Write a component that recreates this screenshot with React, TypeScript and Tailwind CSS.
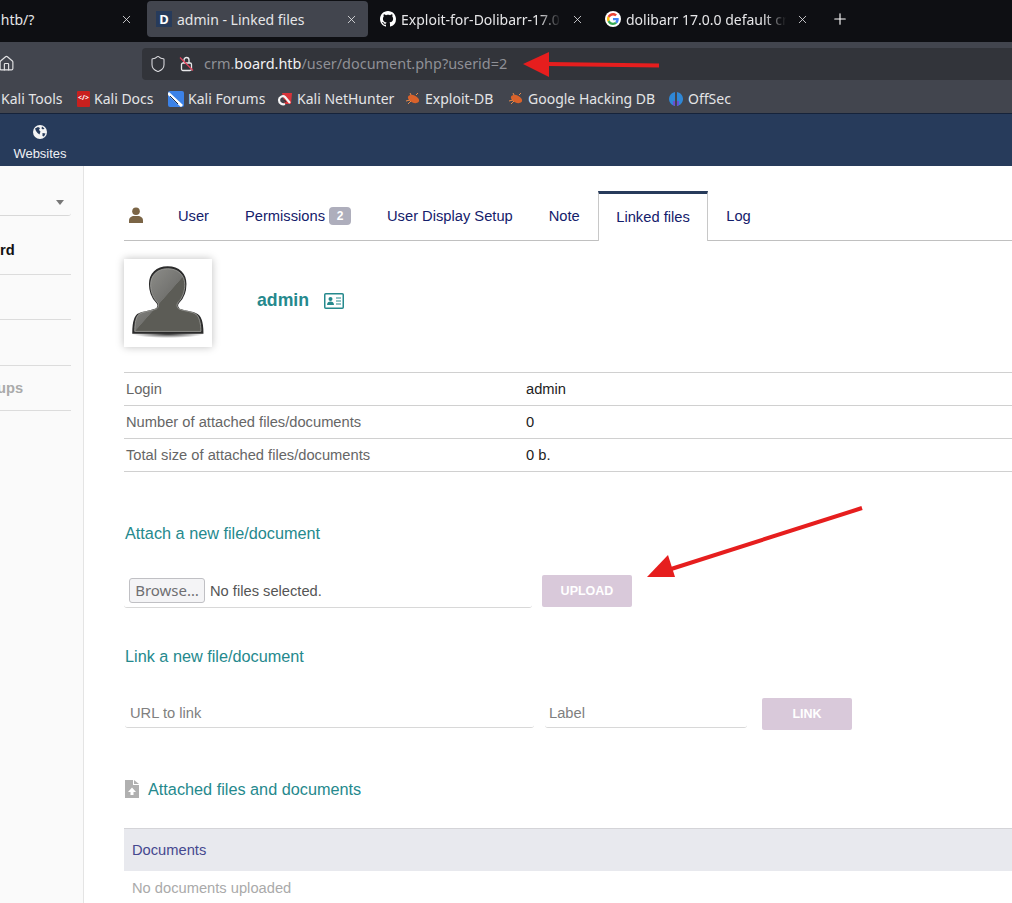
import { Home, Shield, X, Plus } from "lucide-react";

const browserFont = "font-['Noto_Sans',sans-serif]";

const Tab = ({
  title,
  icon,
  active,
}: {
  title: string;
  icon?: React.ReactNode;
  active?: boolean;
}) => (
  <div
    className={`h-[36px] flex items-center gap-[5px] rounded-[4px] shrink-0 ${
      active ? "w-[221px] mr-[4px] pl-[9px] pr-[10px] bg-[#42454e]" : "w-[225px] pl-[8px] pr-[13px]"
    }`}
  >
    {icon}
    <span
      className={`flex-1 overflow-hidden whitespace-nowrap text-[14px] text-[#e6e6e8] ${
        active ? "" : "[mask-image:linear-gradient(to_right,black_85%,transparent_99%)]"
      }`}
    >
      {title}
    </span>
    <X size={13} strokeWidth={1.5} className="text-[#e8e8ea] shrink-0 ml-[3px]" />
  </div>
);

const Bookmark = ({ icon, label, width }: { icon?: React.ReactNode; label: string; width: string }) => (
  <div className={`${width} flex items-center gap-[4px] shrink-0`}>
    {icon}
    <span className="text-[14px] text-[#e4e4e6] whitespace-nowrap">{label}</span>
  </div>
);

const Bug = () => (
  <svg width="16" height="14" viewBox="0 0 16 14">
    <ellipse cx="8.500" cy="7" rx="6" ry="3.600" transform="rotate(25 8.500 7)" fill="#d9622b" />
    <path d="M1 9l4-1M3 12l3-3M11 3l2-2M6 3L5 1" stroke="#e88a4a" strokeWidth="1" />
  </svg>
);

const Github = () => (
  <svg width="16" height="16" viewBox="0 0 16 16" fill="#fff" className="shrink-0">
    <path d="M8 0C3.58 0 0 3.58 0 8c0 3.54 2.29 6.53 5.47 7.59.4.07.55-.17.55-.38 0-.19-.01-.82-.01-1.49-2.01.37-2.53-.49-2.69-.94-.09-.23-.48-.94-.82-1.13-.28-.15-.68-.52-.01-.53.63-.01 1.08.58 1.23.82.72 1.21 1.87.87 2.33.66.07-.52.28-.87.51-1.07-1.78-.2-3.64-.89-3.64-3.95 0-.87.31-1.59.82-2.15-.08-.2-.36-1.02.08-2.12 0 0 .67-.21 2.2.82.64-.18 1.32-.27 2-.27s1.36.09 2 .27c1.53-1.04 2.2-.82 2.2-.82.44 1.1.16 1.92.08 2.12.51.56.82 1.27.82 2.15 0 3.07-1.87 3.75-3.65 3.95.29.25.54.73.54 1.48 0 1.07-.01 1.93-.01 2.2 0 .21.15.46.55.38A8.01 8.01 0 0 0 16 8c0-4.42-3.58-8-8-8z" />
  </svg>
);

const Google = () => (
  <span className="w-[16px] h-[16px] rounded-full bg-white flex items-center justify-center shrink-0">
    <svg width="12" height="12" viewBox="0 0 48 48">
      <path fill="#EA4335" d="M24 9.500c3.500 0 6.700 1.200 9.100 3.600l6.800-6.800C35.800 2.500 30.300 0 24 0 14.600 0 6.500 5.400 2.600 13.200l7.900 6.100C12.400 13.600 17.700 9.500 24 9.500z" />
      <path fill="#4285F4" d="M46.900 24.500c0-1.600-.1-3.100-.4-4.500H24v9h12.900c-.6 3-2.200 5.500-4.700 7.200l7.700 6c4.500-4.200 7-10.300 7-17.700z" />
      <path fill="#FBBC05" d="M10.500 28.700c-.5-1.500-.8-3-.8-4.700s.3-3.200.8-4.700l-7.900-6.100C.9 16.500 0 20.100 0 24s.9 7.500 2.600 10.800l7.900-6.100z" />
      <path fill="#34A853" d="M24 48c6.500 0 11.900-2.100 15.900-5.800l-7.700-6c-2.200 1.400-4.900 2.300-8.200 2.300-6.300 0-11.600-4.100-13.500-9.800l-7.900 6.100C6.500 42.600 14.600 48 24 48z" />
    </svg>
  </span>
);

const TabLink = ({ label, badge, active }: { label: string; badge?: string; active?: boolean }) => (
  <div
    className={`h-[50px] flex items-center text-[14.7px] text-[#14206b] ${
      active ? "px-[17.5px] border-x border-[#c8c8c8] border-t-[3px] border-t-[#273b5b] bg-white mb-[-1px]" : "px-[18px] pt-[1px]"
    }`}
  >
    {label}
    {badge && (
      <span className="ml-[4px] w-[22px] h-[18px] rounded-[4px] bg-[#aeaebc] text-white text-[12px] font-bold flex items-center justify-center">
        {badge}
      </span>
    )}
  </div>
);

const InfoRow = ({ label, value }: { label: string; value: string }) => (
  <div className="h-[33px] flex items-center border-b border-[#d0d0d0] text-[14.7px]">
    <span className="w-[402px] pl-[2px] text-[#666]">{label}</span>
    <span className="text-[#222]">{value}</span>
  </div>
);

const SectionTitle = ({ children }: { children: React.ReactNode }) => (
  <div className="text-[16.25px] leading-[20px] text-[#25898d]">{children}</div>
);

const SideRow = ({ height }: { height: string }) => <div className={`${height} mr-[12px] border-b border-[#dcdcdc]`} />;

const bodyPath =
  "M37.700 2C49 2 55.700 9 55.700 19C55.700 26 53 33 49 37C47 39 47 42 49 44C52 46 62 47 66 49C71 51 72.700 60 72.700 68H3C3 60 4 51 9 49C13 47 23 46 26.500 44C28.500 42 28.500 39 26.500 37C22.500 33 19.700 26 19.700 19C19.700 9 26.500 2 37.700 2Z";

export default function App() {
  return (
    <div className="relative w-[1012px] h-[903px] overflow-hidden bg-white font-['Liberation_Sans',Arial,sans-serif]">
      {/* browser chrome */}
      <div className={browserFont}>
        <div className="h-[42px] bg-[#0e0f13] flex items-center pb-[5px] pt-[1px]">
          <div className="w-[141px] ml-[-3px] h-[36px] flex items-center pr-[5px] shrink-0">
            <span className="flex-1 text-[14px] text-[#e6e6e8]">.htb/?</span>
            <X size={13} strokeWidth={1.5} className="text-[#e8e8ea]" />
          </div>
          <div className="w-[9px] shrink-0" />
          <Tab
            active
            title="admin - Linked files"
            icon={
              <span className="w-[16px] h-[16px] bg-[#273b5b] text-white text-[13px] font-bold flex items-center justify-center leading-none shrink-0">
                D
              </span>
            }
          />
          <Tab title="Exploit-for-Dolibarr-17.0.0" icon={<Github />} />
          <Tab title="dolibarr 17.0.0 default cred" icon={<Google />} />
          <Plus size={18} strokeWidth={1.5} className="text-white ml-[9px]" />
        </div>
        <div className="h-[42px] bg-[#42454e] flex items-center pt-[1px]">
          <Home size={17} strokeWidth={1.6} className="text-[#e4e4e6] ml-[-2px] shrink-0" />
          <div className="ml-[127px] flex-1 h-[32px] bg-[#32343a] rounded-l-[4px] flex items-center pl-[7px]">
            <Shield size={18} strokeWidth={1.4} className="text-[#dcdce0]" />
            <span className="ml-[11px] w-[16px] h-[16px] flex items-center justify-center">
              <svg width="15" height="16" viewBox="0 0 15 16" fill="none">
                <path d="M5 7V4a2.500 2.500 0 0 1 5 0V7" stroke="#e8e8ea" strokeWidth="1.300" />
                <rect x="2.500" y="7" width="10" height="7.500" rx="1.500" stroke="#e8e8ea" strokeWidth="1.300" />
                <path d="M1 1.500l13 13" stroke="#e0405c" strokeWidth="1.300" />
              </svg>
            </span>
            <span className="ml-[10px] text-[14.45px] text-[#8f9096] whitespace-nowrap">
              crm.<span className="text-[#f0f0f2]">board.htb</span>/user/document.php?userid=2
            </span>
          </div>
        </div>
        <div className="h-[29px] bg-[#42454e] flex items-center pl-[1px]">
          <Bookmark width="w-[76px]" label="Kali Tools" />
          <Bookmark
            width="w-[91px]"
            label="Kali Docs"
            icon={<span className="w-[13px] h-[16px] bg-[#c8201e] rounded-[1px] text-white text-[7px] font-bold flex items-center justify-center">&lt;/&gt;</span>}
          />
          <Bookmark
            width="w-[109px]"
            label="Kali Forums"
            icon={
              <svg width="16" height="16" viewBox="0 0 16 16">
                <rect width="16" height="16" rx="2" fill="#3b82e8" />
                <path d="M0 2l14 13" stroke="#fff" strokeWidth="3" />
                <path d="M2 5l8 8" stroke="#20304a" strokeWidth="1" />
              </svg>
            }
          />
          <Bookmark
            width="w-[128px]"
            label="Kali NetHunter"
            icon={
              <svg width="16" height="16" viewBox="0 0 16 16">
                <path d="M5 2h10l-1 11H8z" fill="#d8333a" />
                <path d="M13 12L8 6C6 4 2 6 2 9c0 3 3 5 6 4" fill="none" stroke="#f4f4f4" strokeWidth="2.200" />
                <path d="M7 9l2 2" stroke="#333" strokeWidth="1.500" />
              </svg>
            }
          />
          <Bookmark width="w-[103px]" label="Exploit-DB" icon={<Bug />} />
          <Bookmark width="w-[160px]" label="Google Hacking DB" icon={<Bug />} />
          <Bookmark
            width="w-[80px]"
            label="OffSec"
            icon={
              <svg width="16" height="16" viewBox="0 0 16 16">
                <path d="M7 1C3 2 1 5 1 8c0 3 2 6 6 7z" fill="#2f87d6" />
                <path d="M9 1c4 1 6 4 6 7 0 3-2 6-6 7z" fill="#2f87d6" />
                <path d="M5 10v4l2 1v-5zM9 10v5l2-1v-4z" fill="#6a4fd0" />
              </svg>
            }
          />
        </div>
      </div>

      {/* app top bar */}
      <div className="h-[53px] bg-[#273b5b] border-t border-[#16233a] flex">
        <div className="w-[80px] flex flex-col items-center pt-[11px]">
          <svg width="14" height="14" viewBox="0 0 14 14">
            <circle cx="7" cy="7" r="7" fill="#f4f4f4" />
            <path d="M2 3.500l3-1.500 2 1-1 2 1.500 1.500-1 3-2-1.500L3 6zM9 1.500l2.500 2-1.500 1-1.500-1zM9.500 8l3 .5-1.500 3-1.500-.5z" fill="#273b5b" />
          </svg>
          <span className="mt-[7px] text-[13px] leading-[16px] text-[#eef0f4]">Websites</span>
        </div>
      </div>

      <div className="flex h-[737px]">
        {/* left menu, cut off by the screenshot */}
        <aside className="w-[84px] shrink-0 bg-[#fafafa] border-r border-[#e4e4e4] text-[14.7px]">
          <div className="h-[50px] mr-[12px] border-b border-[#d8d8d8] rounded-br-[3px] flex items-center justify-end pr-[7px] pt-[23px]">
            <span className="w-0 h-0 border-x-[4px] border-x-transparent border-t-[5px] border-t-[#777]" />
          </div>
          <div className="h-[59px] mr-[12px] border-b border-[#dcdcdc] flex items-center pb-[11px] pt-[22px] overflow-hidden">
            <span className="font-bold text-[#111]">rd</span>
          </div>
          <SideRow height="h-[45px]" />
          <SideRow height="h-[46px]" />
          <div className="h-[45px] mr-[12px] border-b border-[#dcdcdc] flex items-center overflow-hidden">
            <span className="font-bold text-[#aaa] ml-[-3px] pt-[1px]">ups</span>
          </div>
        </aside>

        <main className="flex-1 min-w-0 pl-[40px]">
          {/* tabs */}
          <div className="mt-[25px] h-[50px] border-b border-[#c0c0c0] flex items-center">
            <svg width="14" height="16" viewBox="0 0 14 16" className="ml-[5px] mr-[17px] mt-[-1px]" fill="#7b6546">
              <circle cx="7" cy="4.200" r="3.800" />
              <path d="M0 16v-2.500C0 10.500 2.500 9 5 9h4c2.500 0 5 1.500 5 4.500V16z" />
            </svg>
            <TabLink label="User" />
            <TabLink label="Permissions" badge="2" />
            <TabLink label="User Display Setup" />
            <TabLink label="Note" />
            <TabLink label="Linked files" active />
            <TabLink label="Log" />
          </div>

          {/* user card */}
          <div className="mt-[18px] flex items-center">
            <div className="w-[88px] h-[88px] bg-white shadow-[0_0_8px_rgba(0,0,0,0.25)] flex items-center justify-center">
              <svg width="76" height="76" viewBox="0 0 76 76">
                <defs>
                  <linearGradient id="head" x1="0.2" y1="0" x2="0.8" y2="0.5">
                    <stop offset="0" stopColor="#8e8e8a" />
                    <stop offset="0.62" stopColor="#737370" />
                    <stop offset="0.63" stopColor="#5c5c56" />
                  </linearGradient>
                  <radialGradient id="floor">
                    <stop offset="0" stopColor="#333" />
                    <stop offset="1" stopColor="#333" stopOpacity="0" />
                  </radialGradient>
                </defs>
                <ellipse cx="38" cy="69" rx="36" ry="4" fill="url(#floor)" />
                <path d={bodyPath} fill="#2b2b2b" stroke="#2b2b2b" strokeWidth="1.500" />
                <path
                  d={bodyPath}
                  fill="url(#head)"
                  stroke="#a8a8a4"
                  strokeWidth="0.800"
                  transform="translate(37.700 36) scale(0.95) translate(-37.700 -36)"
                />
              </svg>
            </div>
            <span className="ml-[45px] mt-[-6px] text-[17.7px] font-bold text-[#25898d]">admin</span>
            <svg width="20" height="16" viewBox="0 0 20 16" className="ml-[15px] mt-[-5px]">
              <rect x="0.750" y="0.750" width="18.500" height="14.500" rx="1" fill="none" stroke="#25898d" strokeWidth="1.500" />
              <circle cx="6.500" cy="6" r="2" fill="#25898d" />
              <path d="M3 12c0-2.500 1.500-3.500 3.500-3.500S10 9.500 10 12z" fill="#25898d" />
              <path d="M12 5h5M12 8h5M12 11h5" stroke="#25898d" strokeWidth="1" />
            </svg>
          </div>

          {/* counters */}
          <div className="mt-[25px] border-t border-[#d0d0d0]">
            <InfoRow label="Login" value="admin" />
            <InfoRow label="Number of attached files/documents" value="0" />
            <InfoRow label="Total size of attached files/documents" value="0 b." />
          </div>

          {/* attach */}
          <div className="mt-[51px] pl-[1px]">
            <SectionTitle>Attach a new file/document</SectionTitle>
          </div>
          <div className="mt-[31px] flex items-end">
            <div className="w-[408px] h-[34px] mb-[-1px] border-b border-[#d8d8d8] rounded-b-[3px] flex items-center pl-[5px]">
              <span className={`${browserFont} w-[76px] h-[25px] border border-[#c0c0c4] rounded-[3px] bg-[#f4f4f6] text-[15px] text-[#6f6f72] flex items-center justify-center`}>
                Browse…
              </span>
              <span className="ml-[5px] pt-[1px] text-[14.7px] text-[#555]">No files selected.</span>
            </div>
            <div className="ml-[10px] w-[90px] h-[32px] rounded-[2px] bg-[#d9c9da] text-white text-[12.5px] font-bold flex items-center justify-center">
              UPLOAD
            </div>
          </div>

          {/* link */}
          <div className="mt-[39px] pl-[1px]">
            <SectionTitle>Link a new file/document</SectionTitle>
          </div>
          <div className="mt-[30px] flex items-end pl-[1px]">
            <div className="w-[409px] h-[32px] mb-[2px] pt-[3px] border-b border-[#d8d8d8] rounded-b-[3px] flex items-center pl-[5px] text-[14.7px] text-[#808080]">
              URL to link
            </div>
            <div className="ml-[11px] w-[202px] h-[32px] mb-[2px] pt-[3px] border-b border-[#d8d8d8] rounded-b-[3px] flex items-center pl-[4px] text-[14.7px] text-[#808080]">
              Label
            </div>
            <div className="ml-[15px] w-[90px] h-[32px] rounded-[2px] bg-[#d9c9da] text-white text-[12.5px] font-bold flex items-center justify-center">
              LINK
            </div>
          </div>

          {/* attached list */}
          <div className="mt-[49px] flex items-center">
            <svg width="14" height="18" viewBox="0 0 14 18" className="ml-[1px] mr-[9px]">
              <path d="M0 0h8v5h6v13H0z" fill="#b0b0b0" />
              <path d="M9 0l5 4H9z" fill="#b0b0b0" />
              <path d="M7 7.500l4 4.500H8.500v3h-3v-3H3z" fill="#fff" />
            </svg>
            <SectionTitle>Attached files and documents</SectionTitle>
          </div>
          <div className="mt-[29px] h-[43px] bg-[#e8e9ee] border-t border-[#d4d4d8] flex items-center pl-[8px] text-[14.7px] text-[#45488f]">
            Documents
          </div>
          <div className="h-[34px] flex items-center pl-[8px] text-[14.7px] text-[#aaa]">No documents uploaded</div>
        </main>
      </div>

      {/* red annotation arrows drawn over the screenshot */}
      <svg width="1012" height="903" viewBox="0 0 1012 903" className="absolute inset-0 pointer-events-none">
        <path d="M659 65.500L548 64" stroke="#e61e1e" strokeWidth="4" />
        <path d="M523 64L549 52V77z" fill="#e61e1e" />
        <path d="M862 508L668 570" stroke="#e61e1e" strokeWidth="4" />
        <path d="M647 577L668 555L675 577z" fill="#e61e1e" />
      </svg>
    </div>
  );
}
